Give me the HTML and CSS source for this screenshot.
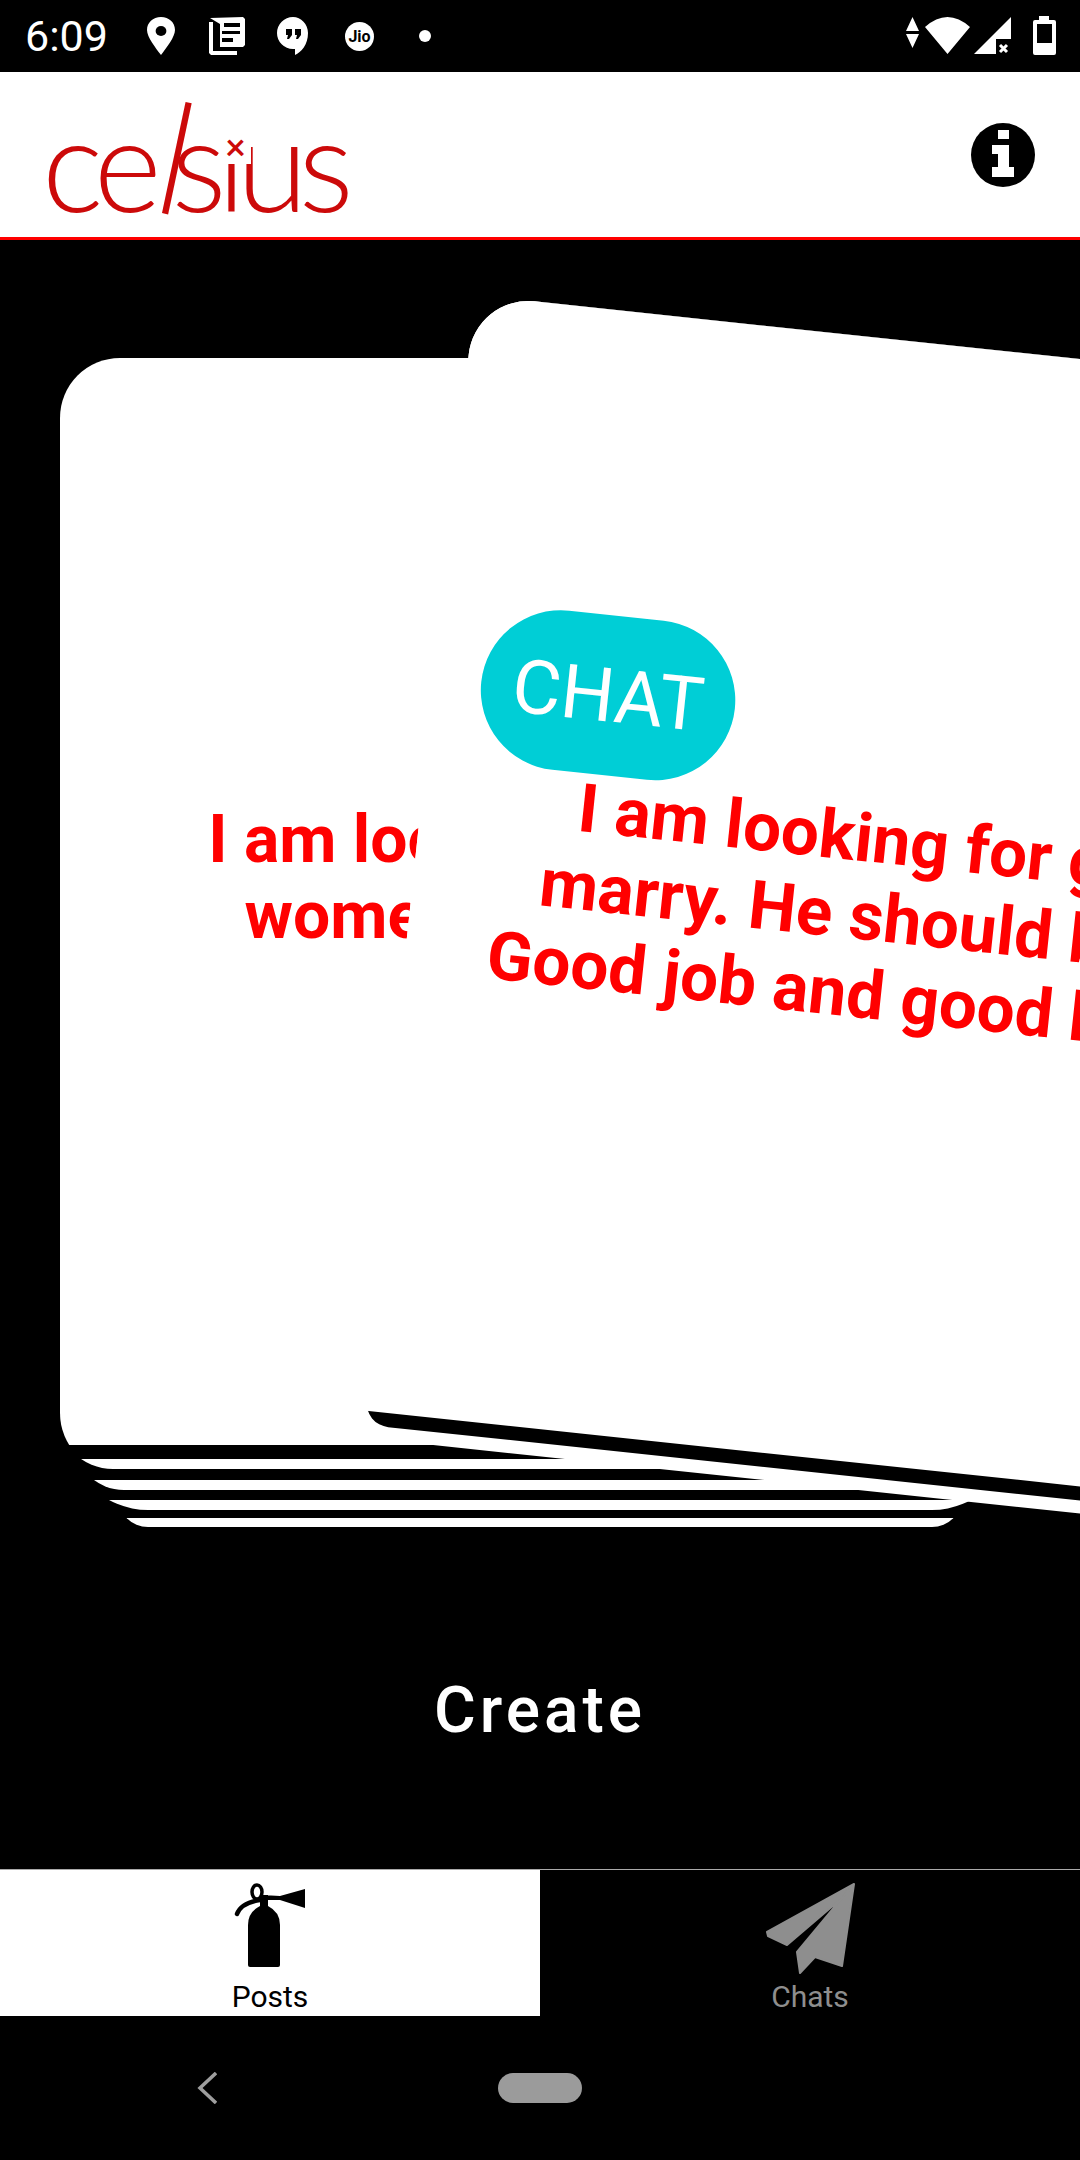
FILE: index.html
```html
<!DOCTYPE html>
<html lang="en">
  <head>
    <meta charset="UTF-8" />
    <title>Celsius</title>
    <link rel="stylesheet" href="styles.css">
  </head>
  <body>
    <div class="status-bar">
      <span class="clock">6:09</span>
      <div class="status-slots">
        <div class="slot">
          <svg width="28" height="38" viewBox="143 17 26 38" preserveAspectRatio="none"><path fill="#fff" d="M156 17c-7.500 0-13 5.600-13 13 0 7 8 18 13 25 5-7 13-18 13-25 0-7.400-5.500-13-13-13z"/><circle cx="156" cy="31" r="5"/></svg>
        </div>
        <div class="slot">
          <svg width="37" height="38" viewBox="202 17 37 38"><path fill="#fff" d="M203 18l33-1 2 2v26l-2 2h-23V24zM202 22h4v29h24v4h-26l-2-2z"/><path d="M217 23h16v4h-16zM215 31h18v3h-18zM215 38h11v4h-11z"/></svg>
        </div>
        <div class="slot">
          <svg width="32" height="38" viewBox="266 17 32 38"><path fill="#fff" d="M282 17a15.500 15.500 0 0 0 0 32h2v6c6-3 13-10 13-22 0-9-7-16-15-16z"/><path d="M275 29h6v6l-3 4h-2l1-4h-2zM284 29h6v6l-3 4h-2l1-4h-2z"/></svg>
        </div>
        <div class="slot">
          <svg width="29" height="29" viewBox="0 0 29 29"><circle fill="#fff" cx="14.500" cy="14.500" r="14.500"/><text class="jio-text" x="14.500" y="20" text-anchor="middle">Jio</text></svg>
        </div>
        <div class="slot"><span class="status-dot"></span></div>
      </div>
      <svg class="status-right" width="150" height="72" viewBox="906 0 150 72">
        <path fill="#fff" d="M912.500 17l6.500 14h-13zM912.500 48l-6.500-14h13zM925 27q22.500-20 45 0l-22.500 27zM1011 17v37h-37z"/>
        <path d="M996 39h15v15h-15z"/>
        <path stroke="#fff" stroke-width="3" d="M1000 45l7 7M1007 45l-7 7"/>
        <path fill="#fff" d="M1039 16h10v4h5q2 0 2 2v31q0 2-2 2h-19q-2 0-2-2v-31q0-2 2-2h4z"/>
        <path d="M1037 24h15v19h-15z"/>
      </svg>
    </div>

    <header class="app-header">
      <div class="logo">
        c<span>e</span><span class="logo-l">l</span><span>s</span><span class="logo-i">i<b class="logo-x">×</b></span><span>u</span><span>s</span>
      </div>
      <svg class="info-icon" width="64" height="64" viewBox="956 124 64 64">
        <circle cx="988" cy="156" r="32"/>
        <path fill="#fff" d="M983 131h11v9h-11zM977 146h17v22h5v10h-22v-10h6v-13h-6z"/>
      </svg>
    </header>

    <main class="stage">
      <div class="deck">
        <div class="post-card">
          <p class="post-text post-text-back">
            <span>I am looking for young</span>
            <span>women to marry me</span>
          </p>
        </div>
        <div class="stripe stripe-1"></div>
        <div class="stripe stripe-2"></div>
        <div class="stripe stripe-3"></div>
        <div class="stripe stripe-4"></div>
      </div>

      <div class="front-stack">
        <div class="sheet-under"></div>
        <div class="sheet-gap"></div>
        <div class="sheet-front">
          <p class="post-text post-text-front">
            <span>I am looking for good</span>
            <span>marry. He should be fit.</span>
            <span>Good job and good height.</span>
          </p>
          <div class="chat-badge">CHAT</div>
        </div>
      </div>

      <div class="create">Create</div>
    </main>

    <nav class="tabs">
      <div class="tab tab-active">
        <svg width="80" height="94" viewBox="230 1880 80 94">
          <path d="M248 1965v-40q0-13 12-19h8q12 6 12 19v40q0 2-2 2h-28q-2 0-2-2z"/>
          <path d="M260 1895h8v13h-8zM262 1895l18 1 25-7v19l-25-8h-18z"/>
          <ellipse cx="257" cy="1892" rx="5" ry="7" fill="none" stroke="#000" stroke-width="3.500"/>
          <path d="M260 1900q-19 3-23 14" fill="none" stroke="#000" stroke-width="4.500" stroke-linecap="round"/>
        </svg>
        <span class="tab-label">Posts</span>
      </div>
      <div class="tab">
        <svg width="90" height="94" viewBox="765 1880 90 94">
          <path fill="#8e8e8e" stroke="#8e8e8e" stroke-width="2" stroke-linejoin="round" d="M854 1884l-87 48 1 4 19 9 55-47zM854 1884l-12 82-27-9-15 16-3-21 45-54z"/>
        </svg>
        <span class="tab-label">Chats</span>
      </div>
    </nav>

    <div class="nav-bar">
      <svg class="nav-back" width="20" height="32" viewBox="197 2072 20 32">
        <path fill="none" stroke="#9e9e9e" stroke-width="3.500" d="M216 2073l-16 15 16 15"/>
      </svg>
      <div class="nav-home"></div>
    </div>
  </body>
</html>
```

FILE: styles.css
```css
* {
  box-sizing: border-box;
}
body {
  margin: 0;
  width: 1080px;
  height: 2160px;
  overflow: hidden;
  display: flex;
  flex-direction: column;
  background: #000;
  font-family: Roboto, sans-serif;
}

/* status bar */
.status-bar {
  height: 72px;
  display: flex;
  align-items: center;
  color: #fff;
  padding-left: 25px;
}
.clock {
  width: 103px;
  font-size: 43px;
}
.status-slots {
  display: flex;
}
.slot {
  width: 66px;
  height: 72px;
  display: flex;
  align-items: center;
  justify-content: center;
}
.jio-text {
  font-family: Roboto, sans-serif;
  font-size: 16px;
  font-weight: 700;
}
.status-dot {
  width: 12px;
  height: 12px;
  border-radius: 50%;
  background: #fff;
}
.status-right {
  margin-left: auto;
  margin-right: 24px;
}

/* header */
.app-header {
  height: 168px;
  background: #fff;
  border-bottom: 3px solid #f00;
  display: flex;
  align-items: center;
  justify-content: space-between;
  padding: 0 45px 0 42px;
}
.logo {
  margin-top: 14px;
  color: #cc0a0a;
  font-family: Lato, sans-serif;
  font-weight: 300;
  font-size: 130px;
  line-height: 130px;
  letter-spacing: -9.500px;
  white-space: nowrap;
}
.logo span {
  display: inline-block;
}
.logo-l {
  transform-origin: 50% 85%;
  transform: rotate(12deg) scaleY(1.2);
}
.logo-i {
  position: relative;
}
.logo-x {
  position: absolute;
  left: 8px;
  top: 7px;
  padding-top: 24px;
  width: 26px;
  font-size: 36px;
  line-height: 36px;
  letter-spacing: 0;
  font-weight: 700;
  background: #fff;
}

/* cards */
.stage {
  flex: 1;
  position: relative;
  overflow: hidden;
  display: flex;
  flex-direction: column;
}
.deck {
  margin-top: 118px;
  display: flex;
  flex-direction: column;
}
.post-card {
  margin: 0 60px -28px;
  height: 1115px;
  flex: none;
  background: #fff;
  border-radius: 60px;
  clip-path: inset(0 0 28px 0);
}
/* only the bottom slice of each card behind shows, so clip off the rest */
.stripe {
  flex: none;
  background: #fff;
}
.stripe-1 {
  margin: -32px 57px 0;
  height: 56px;
  border-radius: 0 0 56px 56px;
  clip-path: inset(46px 0 0 0);
}
.stripe-2 {
  margin: -29px 74px 0;
  height: 50px;
  border-radius: 0 0 50px 50px;
  clip-path: inset(40px 0 0 0);
}
.stripe-3 {
  margin: -61px 67px 0;
  height: 81px;
  border-radius: 0 0 81px 81px;
  clip-path: inset(71px 0 0 0);
}
.stripe-4 {
  margin: -13px 118px 0;
  height: 30px;
  border-radius: 0 0 30px 30px;
  clip-path: inset(21px 0 0 0);
}
.post-text {
  margin: 0;
  color: #f00;
  font-size: 66px;
  font-weight: 700;
  text-align: center;
  white-space: nowrap;
}
.post-text span {
  display: block;
}
.post-text-back {
  padding-top: 444px;
  line-height: 76px;
}
.post-text-front {
  padding-top: 460px;
  font-size: 67.500px;
  line-height: 78px;
}

.front-stack {
  position: absolute;
  left: 475px;
  top: 55px;
  width: 960px;
  height: 1121px;
  transform-origin: 0 0;
  transform: rotate(6.05deg);
}
.sheet-under,
.sheet-gap,
.sheet-front {
  position: absolute;
  top: 0;
  right: 0;
}
.sheet-under {
  left: 0;
  bottom: -27px;
  background: #fff;
  border-radius: 60px 0 0 0;
}
.sheet-gap {
  left: 9px;
  bottom: -14px;
  background: #000;
  border-radius: 60px 0 0 24px;
}
.sheet-front {
  left: 0;
  bottom: 0;
  background: #fff;
  border-radius: 60px 0 0 0;
}
.chat-badge {
  position: absolute;
  left: 47px;
  top: 304px;
  width: 255px;
  height: 160px;
  border-radius: 80px;
  background: #00ced6;
  color: #fff;
  font-size: 75px;
  display: flex;
  align-items: center;
  justify-content: center;
}

.create {
  margin-top: 144px;
  color: #fff;
  font-size: 64px;
  font-weight: 500;
  letter-spacing: 4px;
  line-height: 80px;
  text-align: center;
}

/* tabs */
.tabs {
  height: 147px;
  border-top: 1px solid #aaa;
  display: flex;
}
.tab {
  width: 540px;
  display: flex;
  flex-direction: column;
  align-items: center;
  padding-top: 10px;
}
.tab-active {
  background: #fff;
}
.tab-label {
  margin-top: 6px;
  font-size: 30px;
  line-height: 34px;
  color: #8e8e8e;
}
.tab-active .tab-label {
  color: #000;
}

/* android nav */
.nav-bar {
  height: 144px;
  position: relative;
  display: flex;
  justify-content: center;
  align-items: flex-start;
  padding-top: 57px;
}
.nav-back {
  position: absolute;
  left: 197px;
  top: 56px;
}
.nav-home {
  width: 84px;
  height: 30px;
  border-radius: 15px;
  background: #9b9b9b;
}
```
